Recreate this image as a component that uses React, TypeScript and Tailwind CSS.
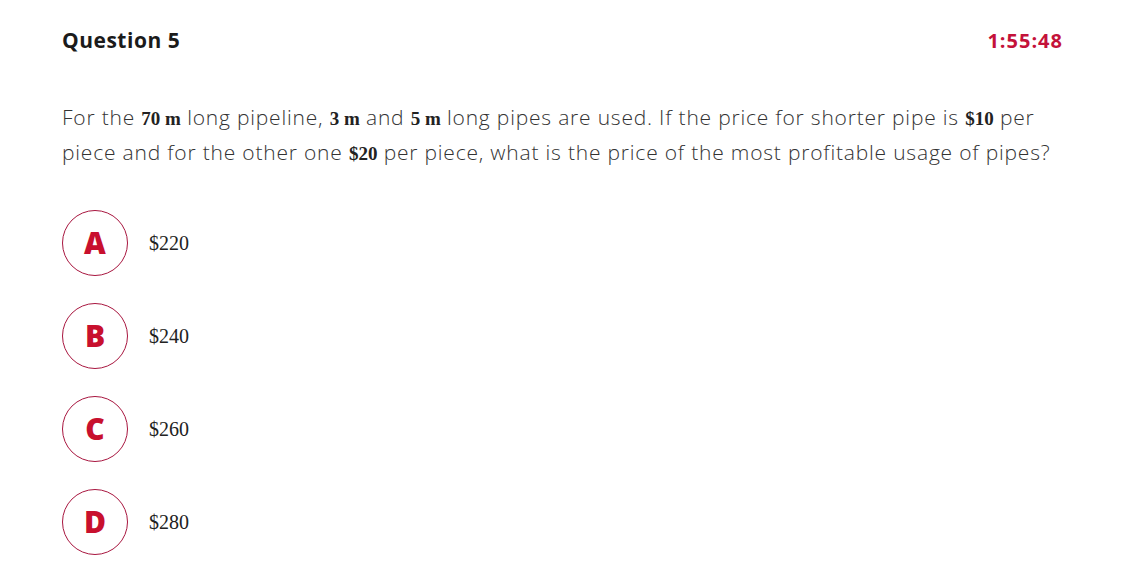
import React from 'react';

const options = [
  { letter: 'A', value: '$220' },
  { letter: 'B', value: '$240' },
  { letter: 'C', value: '$260' },
  { letter: 'D', value: '$280' },
];

function M({ children }: { children: React.ReactNode }) {
  return (
    <span className="font-['Liberation_Serif',serif] font-bold text-[19px] leading-none tracking-normal text-[#222]">
      {children}
    </span>
  );
}

export default function App() {
  return (
    <div className="min-h-[569px] w-[1133px] bg-white pl-[62px] pr-[70px] pt-[25px] font-['Open_Sans',sans-serif]">
      <div className="flex items-center justify-between">
        <h2 className="text-[21px] font-bold tracking-[0.5px] text-[#1b1b1b]">Question 5</h2>
        <span className="text-[20px] font-bold tracking-[1px] text-[#c4123a]">1:55:48</span>
      </div>

      <p className="mt-[43px] max-w-[1000px] text-[21px] font-light leading-[35px] tracking-[0.8px] text-[#333]">
        For the <M>70 m</M> long pipeline, <M>3 m</M> and <M>5 m</M> long pipes are used. If the price for shorter
        pipe is <M>$10</M> per piece and for the other one <M>$20</M> per piece, what is the price of the most
        profitable usage of pipes?
      </p>

      <div className="mt-[40px] flex flex-col gap-[27px]">
        {options.map((o) => (
          <div key={o.letter} className="flex items-center">
            <div className="flex h-[66px] w-[66px] items-center justify-center rounded-full border border-[#a8163f] text-[30px] font-extrabold text-[#c8102e]">
              {o.letter}
            </div>
            <span className="ml-[21px] font-['Liberation_Serif',serif] text-[20px] text-[#222]">{o.value}</span>
          </div>
        ))}
      </div>
    </div>
  );
}
